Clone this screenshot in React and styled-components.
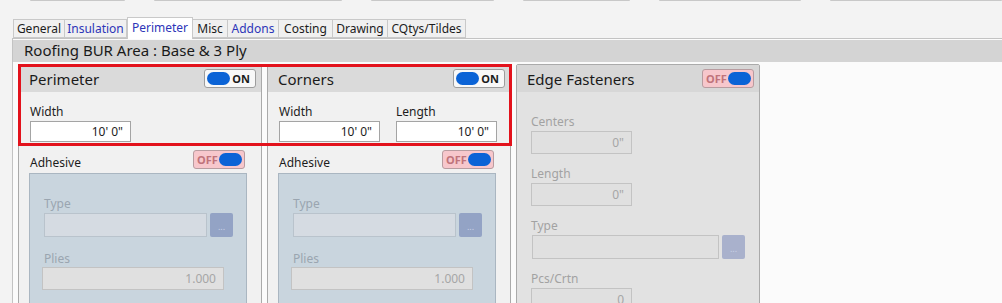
import React from 'react'
import styled, { createGlobalStyle } from 'styled-components';

const GlobalStyle = createGlobalStyle`
    html, body { margin: 0; padding: 0; }
    body { font-family: 'Noto Sans', 'Open Sans', sans-serif; }
    * { box-sizing: border-box; }
`;

const Page = styled.div`
    width: 1002px;
    height: 303px;
    overflow: hidden;
    background-color: #f3f3f3;
    color: #1c1c1c;
`;
const TopStrip = styled.div`
    display: flex;
    gap: 29px;
    padding-left: 30px;
    height: 2px;
`;
const StripBar = styled.div`
    width: ${props => props.w}px;
    height: 1px;
    background-color: #c8c8c8;
    border-radius: 0 0 2px 2px;
`;
const TabRow = styled.div`
    display: flex;
    align-items: flex-start;
    margin-top: 15px;
    margin-left: 13px;
    height: 21px;
    position: relative;
    z-index: 1;
`;
const Tab = styled.div`
    width: ${props => props.w}px;
    height: ${props => props.isActive ? '22px' : '19px'};
    margin-top: ${props => props.isActive ? '0' : '2px'};
    border: 1px solid #c9c9c9;
    border-bottom: ${props => props.isActive ? 'none' : '1px solid #c9c9c9'};
    border-left: ${props => props.first || props.isActive ? '1px solid #c9c9c9' : 'none'};
    background-color: ${props => props.isActive ? '#ffffff' : '#f0f0f0'};
    color: ${props => props.blue ? '#2d35b8' : '#1c1c1c'};
    font-size: 12px;
    display: flex;
    align-items: center;
    justify-content: center;
    padding-bottom: ${props => props.isActive ? '3px' : '0'};
    & + & { margin-left: ${props => props.isActive ? '-1px' : '0'}; }
`;
const Content = styled.div`
    margin-left: 12px;
    border-top: 1px solid #c3c3c3;
    border-left: 1px solid #c3c3c3;
    padding-top: 1px;
    background-color: #fbfbfb;
    height: 270px;
`;
const TitleBar = styled.div`
    height: 22px;
    background-color: #d4d4d4;
    padding-left: 11px;
    font-size: 15px;
    line-height: 21px;
    color: #1a1a1a;
`;
const PanelRow = styled.div`
    position: relative;
    display: flex;
    gap: 4px;
    padding: 2px 0 0 5px;
`;
const Highlight = styled.div`
    position: absolute;
    left: 5px;
    top: 2px;
    width: 494px;
    height: 82px;
    border: 3px solid #e3121c;
    pointer-events: none;
`;
const Panel = styled.div`
    width: 244px;
    height: 250px;
    margin-left: ${props => props.shift || 0}px;
    border: 1px solid #aaaaaa;
    border-radius: 2px 2px 0 0;
    background-color: ${props => props.disabled ? '#e2e2e2' : '#f1f1f1'};
    display: flex;
    flex-direction: column;
`;
const PanelHeader = styled.div`
    height: 27px;
    flex-shrink: 0;
    display: flex;
    align-items: center;
    justify-content: space-between;
    padding: 0 5px 0 10px;
    background-color: ${props => props.disabled ? '#d7d7d7' : '#dadada'};
`;
const PanelTitle = styled.div`
    font-size: 15px;
    color: #1a1a1a;
`;
const PanelBody = styled.div`
    padding: ${props => props.disabled ? '21px 14px 0 14px' : '11px 14px 0 11px'};
    display: flex;
    flex-direction: column;
`;
const FieldRow = styled.div`
    display: flex;
    gap: 16px;
`;
const Field = styled.div`
    display: flex;
    flex-direction: column;
    margin-bottom: ${props => props.spaced ? '11px' : '0'};
`;
const Label = styled.div`
    font-size: 12px;
    line-height: 17px;
    height: 17px;
    color: ${props => props.dim ? '#a2a2a2' : props.muted ? '#9aa5b0' : '#1c1c1c'};
`;
const ValueBox = styled.div`
    width: ${props => props.w}px;
    height: ${props => props.h || 21}px;
    margin-top: 1px;
    margin-left: ${props => props.offset || 0}px;
    border: 1px solid ${props => props.tone === 'white' ? '#a4a4a4' : props.tone === 'blue' ? '#b9c3cc' : '#c3c3c3'};
    background-color: ${props => props.tone === 'white' ? '#ffffff' : props.tone === 'blue' ? '#d5dbe2' : '#e0e0e0'};
    color: ${props => props.tone === 'white' ? '#1c1c1c' : '#a6a6a6'};
    font-size: 12px;
    display: flex;
    align-items: center;
    justify-content: flex-end;
    padding-right: 7px;
`;
const PickRow = styled.div`
    display: flex;
    gap: 3px;
    margin-top: 1px;
    margin-left: ${props => props.offset || 0}px;
`;
const DotsButton = styled.div`
    width: 23px;
    height: 24px;
    border-radius: 2px;
    background-color: ${props => props.faint ? '#a9b1cc' : '#93a3c5'};
    color: #c9d1e6;
    font-size: 9px;
    display: flex;
    align-items: center;
    justify-content: center;
    padding-top: 3px;
`;
const SubHeader = styled.div`
    display: flex;
    justify-content: space-between;
    height: 21px;
    margin-top: 8px;
    padding-right: 2px;
    & > ${Label} { align-self: flex-end; }
`;
const AdhesiveBox = styled.div`
    margin-top: 2px;
    margin-left: -1px;
    width: 218px;
    height: 140px;
    background-color: #c9d5de;
    border: 1px solid #aab6c1;
    padding: 21px 13px 0 14px;
    display: flex;
    flex-direction: column;
`;
const ToggleFrame = styled.div`
    width: 52px;
    height: 19px;
    border: 1px solid ${props => props.isOn ? '#9d9d9d' : '#b89ca0'};
    border-radius: 3px;
    background-color: ${props => props.isOn ? '#f8f8f8' : '#f7c7cc'};
    display: flex;
    flex-direction: ${props => props.isOn ? 'row' : 'row-reverse'};
    align-items: center;
    justify-content: space-between;
    padding: 0 2px;
`;
const Knob = styled.div`
    width: 23px;
    height: 13px;
    border-radius: 7px;
    background-color: #0b63d6;
`;
const ToggleText = styled.div`
    font-size: 11px;
    font-weight: bold;
    line-height: 1;
    color: ${props => props.isOn ? '#1c1c1c' : '#c0737b'};
    padding: ${props => props.isOn ? '0 3px 0 0' : '0 0 0 1px'};
`;

const Toggle = ({ isOn }) => (
    <ToggleFrame isOn={isOn}>
        <Knob />
        <ToggleText isOn={isOn}>{isOn ? 'ON' : 'OFF'}</ToggleText>
    </ToggleFrame>
);

const Adhesive = () => (
    <>
        <SubHeader>
            <Label>Adhesive</Label>
            <Toggle />
        </SubHeader>
        <AdhesiveBox>
            <Label muted>Type</Label>
            <PickRow>
                <ValueBox tone="blue" w={163} h={24} style={{ marginTop: 0 }} />
                <DotsButton>...</DotsButton>
            </PickRow>
            <Field style={{ marginTop: 13 }}>
                <Label muted>Plies</Label>
                <ValueBox tone="gray" w={182} h={23} offset={-2} style={{ marginTop: 0 }}>1.000</ValueBox>
            </Field>
        </AdhesiveBox>
    </>
);

const tabs = [
    { name: 'General', w: 52 },
    { name: 'Insulation', w: 62, blue: true },
    { name: 'Perimeter', w: 66, blue: true, isActive: true },
    { name: 'Misc', w: 35 },
    { name: 'Addons', w: 51, blue: true },
    { name: 'Costing', w: 54 },
    { name: 'Drawing', w: 55 },
    { name: 'CQtys/Tildes', w: 78 },
];
const strip = [95, 188, 123, 107, 142, 172];

const App = () => (
    <Page>
        <GlobalStyle />
        <TopStrip>
            {strip.map((w, i) => <StripBar key={i} w={w} />)}
        </TopStrip>
        <TabRow>
            {tabs.map((t, i) => (
                <Tab key={t.name} w={t.w} blue={t.blue} isActive={t.isActive} first={i === 0}>
                    {t.name}
                </Tab>
            ))}
        </TabRow>
        <Content>
            <TitleBar>Roofing BUR Area : Base &amp; 3 Ply</TitleBar>
            <PanelRow>
                <Panel>
                    <PanelHeader>
                        <PanelTitle>Perimeter</PanelTitle>
                        <Toggle isOn />
                    </PanelHeader>
                    <PanelBody>
                        <FieldRow>
                            <Field>
                                <Label>Width</Label>
                                <ValueBox tone="white" w={101}>10' 0"</ValueBox>
                            </Field>
                        </FieldRow>
                        <Adhesive />
                    </PanelBody>
                </Panel>
                <Panel shift={1}>
                    <PanelHeader>
                        <PanelTitle>Corners</PanelTitle>
                        <Toggle isOn />
                    </PanelHeader>
                    <PanelBody>
                        <FieldRow>
                            <Field>
                                <Label>Width</Label>
                                <ValueBox tone="white" w={101}>10' 0"</ValueBox>
                            </Field>
                            <Field>
                                <Label>Length</Label>
                                <ValueBox tone="white" w={101}>10' 0"</ValueBox>
                            </Field>
                        </FieldRow>
                        <Adhesive />
                    </PanelBody>
                </Panel>
                <Panel disabled shift={1}>
                    <PanelHeader disabled>
                        <PanelTitle>Edge Fasteners</PanelTitle>
                        <Toggle />
                    </PanelHeader>
                    <PanelBody disabled>
                        <Field spaced>
                            <Label dim>Centers</Label>
                            <ValueBox w={101} h={23}>0"</ValueBox>
                        </Field>
                        <Field spaced>
                            <Label dim>Length</Label>
                            <ValueBox w={101} h={23}>0"</ValueBox>
                        </Field>
                        <Field spaced>
                            <Label dim>Type</Label>
                            <PickRow offset={1}>
                                <ValueBox w={188} h={24} style={{ marginTop: 0 }} />
                                <DotsButton faint>...</DotsButton>
                            </PickRow>
                        </Field>
                        <Field>
                            <Label dim>Pcs/Crtn</Label>
                            <ValueBox w={101} h={23}>0</ValueBox>
                        </Field>
                    </PanelBody>
                </Panel>
                <Highlight />
            </PanelRow>
        </Content>
    </Page>
);

export default App;
